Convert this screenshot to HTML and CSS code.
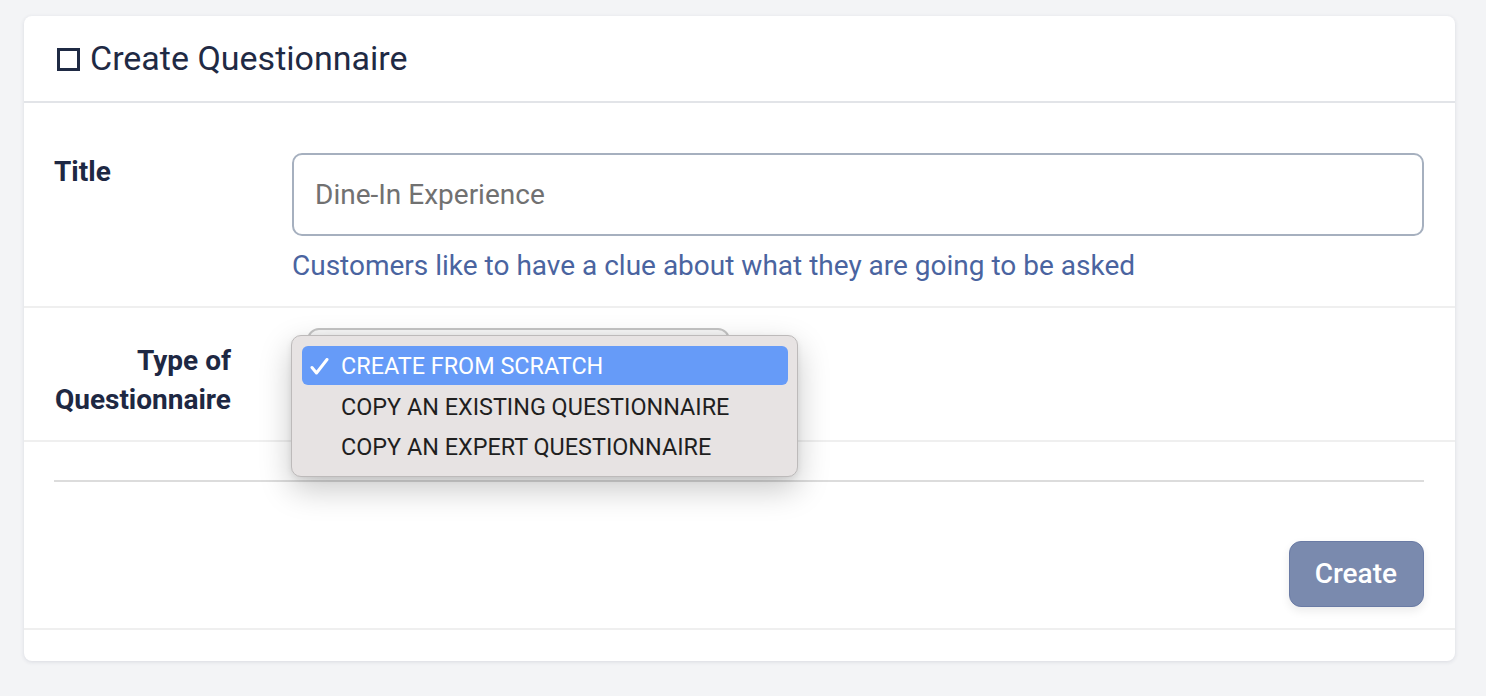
FILE: index.html
```html
<!DOCTYPE html>
<html lang="en">
<head>
  <meta charset="UTF-8">
  <meta name="viewport" content="width=device-width, initial-scale=1.0">
  <title>Create Questionnaire</title>
  <link rel="stylesheet" href="styles.css">
</head>
<body>
  <div class="card">
    <div class="card-header">
      <svg class="header-icon" width="23" height="23" viewBox="0 0 23 23" aria-hidden="true">
        <rect x="1.5" y="1.5" width="20" height="20" fill="none" stroke="#1f2a44" stroke-width="3"/>
      </svg>
      <h1>Create Questionnaire</h1>
    </div>

    <form id="questionnaireForm">
      <div class="form-row">
        <label for="title" class="row-label">Title</label>
        <div class="field">
          <input type="text" id="title" name="title" placeholder="Dine-In Experience">
          <p class="help">Customers like to have a clue about what they are going to be asked</p>
        </div>
      </div>

      <div class="form-row">
        <label for="type" class="row-label right">Type of<br>Questionnaire</label>
        <div class="field">
          <div class="select" id="type"></div>
          <ul class="menu">
            <li class="option selected">
              <span class="check">
                <svg width="19" height="17" viewBox="0 0 19 17" aria-hidden="true">
                  <path d="M2 9.5 L6.5 15 L17 1.5" fill="none" stroke="#fff" stroke-width="3" stroke-linecap="round" stroke-linejoin="round"/>
                </svg>
              </span>CREATE FROM SCRATCH
            </li>
            <li class="option"><span class="check"></span>COPY AN EXISTING QUESTIONNAIRE</li>
            <li class="option"><span class="check"></span>COPY AN EXPERT QUESTIONNAIRE</li>
          </ul>
        </div>
      </div>

      <div class="form-footer">
        <hr>
        <div class="actions">
          <button type="button" class="btn-create">Create</button>
        </div>
      </div>
    </form>
  </div>
</body>
</html>
```

FILE: styles.css
```css
body {
    font-family: Roboto, "Liberation Sans", sans-serif;
    background: #f3f4f6;
    color: #1f2a44;
    margin: 0;
    padding: 16px 31px 35px 24px;
}
.card {
    background: #ffffff;
    border-radius: 8px;
    box-shadow: 0 1px 4px rgba(30, 40, 70, 0.12);
    padding-bottom: 31px;
}
.card-header {
    display: flex;
    align-items: center;
    gap: 10px;
    padding: 22px 32px 23px 33px;
    border-bottom: 2px solid #e2e4e8;
}
.header-icon {
    flex: none;
    margin-top: 2px;
}
h1 {
    margin: 0;
    font-size: 34px;
    line-height: 40px;
    font-weight: 400;
    color: #1f2a44;
}
.form-row {
    display: grid;
    grid-template-columns: 177px 1fr;
    column-gap: 61px;
    padding: 50px 31px 22px 30px;
    border-bottom: 2px solid #efefef;
}
.form-row + .form-row {
    padding-top: 20px;
    padding-bottom: 20px;
}
.row-label {
    font-size: 28px;
    line-height: 36px;
    font-weight: 700;
    color: #1e2843;
    margin-top: 1px;
}
.row-label.right {
    text-align: right;
    line-height: 39px;
    margin-top: 13px;
}
.field {
    position: relative;
}
input {
    display: block;
    width: 100%;
    height: 83px;
    box-sizing: border-box;
    padding: 0 21px;
    border: 2px solid #a6b0bf;
    border-radius: 10px;
    font-family: inherit;
    font-size: 28px;
    color: #333;
    background: #fff;
    outline: none;
}
input::placeholder {
    color: #717171;
}
.help {
    margin: 12px 0 0;
    font-size: 28px;
    line-height: 36px;
    color: #4a64a0;
}
.select {
    margin-left: 15px;
    width: 423px;
    height: 92px;
    box-sizing: border-box;
    border: 2px solid #c4c4c4;
    border-radius: 12px;
    background: #f6f6f6;
}
.menu {
    position: absolute;
    top: 7px;
    left: -1px;
    width: 507px;
    box-sizing: border-box;
    margin: 0;
    padding: 10px 9px 10px 10px;
    list-style: none;
    background: #e7e3e3;
    border: 1px solid #bdbaba;
    border-radius: 10px;
    box-shadow: 0 12px 32px rgba(0, 0, 0, 0.22), 0 2px 6px rgba(0, 0, 0, 0.08);
}
.option {
    display: flex;
    align-items: center;
    height: 40px;
    padding-left: 8px;
    padding-top: 1px;
    box-sizing: border-box;
    font-size: 23.4px;
    color: #1f1f1f;
    border-radius: 6px;
}
.option.selected {
    height: 39px;
    margin-bottom: 1px;
    background: #669bf8;
    color: #ffffff;
}
.check {
    display: flex;
    align-items: center;
    width: 31px;
    flex: none;
}
.form-footer {
    padding: 38px 31px 21px 30px;
    border-bottom: 2px solid #efefef;
}
hr {
    margin: 0;
    height: 2px;
    border: none;
    background: #dcdcdc;
}
.actions {
    display: flex;
    justify-content: flex-end;
    margin-top: 59px;
}
.btn-create {
    font-family: inherit;
    font-size: 28px;
    font-weight: 500;
    line-height: 33px;
    padding: 15px 26px 16px 25px;
    color: #ffffff;
    background: #7a8aae;
    border: 1px solid #6a7ba5;
    border-radius: 12px;
    box-shadow: 0 4px 10px rgba(0, 0, 0, 0.08);
    cursor: pointer;
}
```
